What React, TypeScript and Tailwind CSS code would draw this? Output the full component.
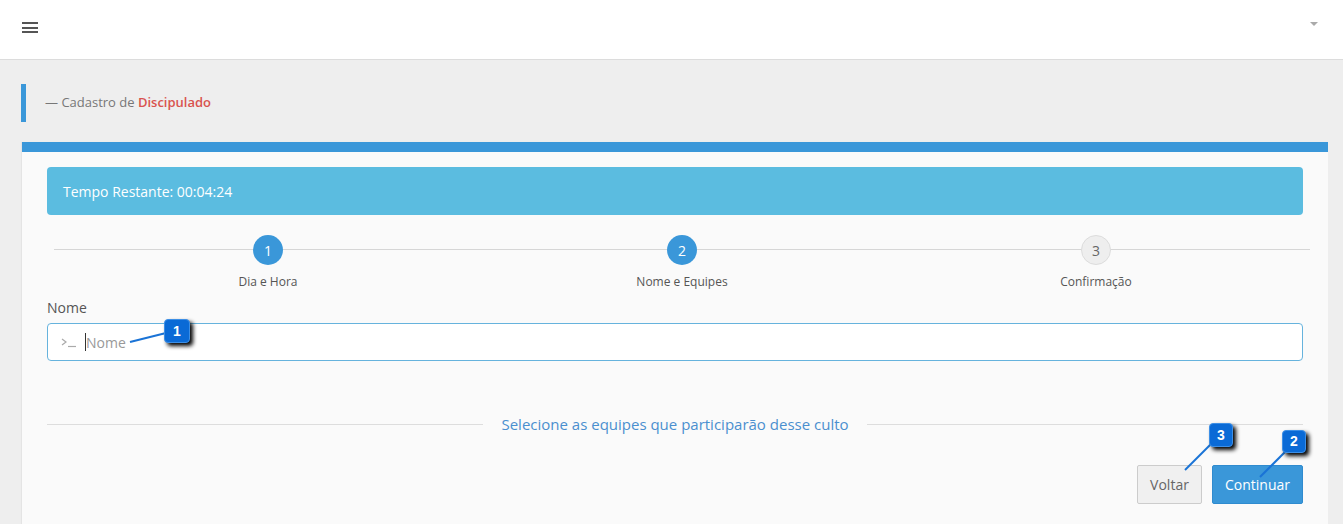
import React from 'react';

const steps = [
  { n: 1, label: 'Dia e Hora', done: true },
  { n: 2, label: 'Nome e Equipes', done: true },
  { n: 3, label: 'Confirmação', done: false },
];

function Badge({ n, className }: { n: number; className: string }) {
  return (
    <div
      className={`absolute flex items-center justify-center rounded-[4px] border border-[#3d8fe6] bg-[#0a6ad6] text-[14px] font-bold text-white shadow-[3px_3px_4px_rgba(0,0,0,1)] font-['Liberation_Sans',sans-serif] ${className}`}
    >
      {n}
    </div>
  );
}

export default function App() {
  return (
    <div className="relative min-h-screen overflow-hidden bg-[#eeeeee] font-['Open_Sans',sans-serif]">
      {/* top bar */}
      <header className="flex h-[60px] items-start justify-between border-b border-[#dcdcdc] bg-white px-[22px]">
        <div className="mt-[22px] flex w-4 flex-col gap-[2.5px]">
          <span className="h-[2px] bg-[#555]" />
          <span className="h-[2px] bg-[#555]" />
          <span className="h-[2px] bg-[#555]" />
        </div>
        <span className="mr-[3px] mt-[22px] h-0 w-0 border-x-[4px] border-t-[4px] border-x-transparent border-t-[#aaa]" />
      </header>

      {/* breadcrumb */}
      <div className="ml-[21px] mt-[24px] flex h-[38px] items-center border-l-[5px] border-[#3a97d9] pl-[19px] text-[13px] text-[#777]">
        — Cadastro de&nbsp;<span className="font-semibold text-[#d9534f]">Discipulado</span>
      </div>

      {/* card */}
      <div className="ml-[22px] mr-[15px] mt-[20px] border-t-[10px] border-[#3a97d9] bg-[#fafafa] px-[25px] pb-10 pt-[15px] shadow-[-1px_0_1px_rgba(0,0,0,0.04)]">
        <div className="flex h-[48px] items-center rounded-[4px] bg-[#5bbce0] px-[16px] text-[14px] text-white">
          Tempo Restante: 00:04:24
        </div>

        <div className="relative mt-[20px]">
          <div className="absolute left-[7px] right-[-7px] top-[14px] h-px bg-[#d6d6d6]" />
          <div className="relative grid grid-cols-3 pl-[14px]">
            {steps.map((s) => (
              <div key={s.n} className="flex flex-col items-center">
                <div
                  className={
                    s.done
                      ? 'flex h-[30px] w-[30px] items-center justify-center rounded-full bg-[#3a97d9] text-[14px] text-white'
                      : 'flex h-[30px] w-[30px] items-center justify-center rounded-full border border-[#dcdcdc] bg-[#eeeeee] text-[14px] text-[#666]'
                  }
                >
                  {s.n}
                </div>
                <div className="mt-[8px] text-[12px] leading-[17px] text-[#555]">{s.label}</div>
              </div>
            ))}
          </div>
        </div>

        <div className="mt-[8px] text-[14px] leading-[20px] text-[#555]">Nome</div>
        <div className="mt-[5px] flex h-[38px] items-center rounded-[4px] border border-[#66b3dd] bg-white pl-[13px]">
          <svg width="16" height="12" viewBox="0 0 16 12" fill="none" stroke="#aaa" strokeWidth="1.2">
            <polyline points="1,3 5,6 1,9" />
            <line x1="7" y1="10.5" x2="15" y2="10.5" />
          </svg>
          <span className="ml-[8px] h-[18px] w-px bg-[#333]" />
          <span className="text-[14px] text-[#999]">Nome</span>
        </div>

        <div className="mt-[53px] flex items-center">
          <div className="h-px flex-1 bg-[#dddddd]" />
          <div className="px-[18px] text-[15px] leading-[20px] text-[#4a8fcf]">
            Selecione as equipes que participarão desse culto
          </div>
          <div className="h-px flex-1 bg-[#dddddd]" />
        </div>

        <div className="mt-[31px] flex justify-end gap-[10px]">
          <button className="h-[39px] w-[65px] rounded-[2px] border border-[#cccccc] bg-[#f0f0f0] text-[14px] text-[#666]">
            Voltar
          </button>
          <button className="h-[39px] w-[91px] rounded-[2px] border border-[#2f8bcf] bg-[#3a97d9] text-[14px] text-white">
            Continuar
          </button>
        </div>
      </div>

      {/* annotations */}
      <svg className="pointer-events-none absolute inset-0 h-full w-full" fill="none" stroke="#1a73d6" strokeWidth="2">
        <line x1="130" y1="342" x2="166" y2="333" />
        <line x1="1185" y1="470" x2="1212" y2="443" />
        <line x1="1260" y1="477" x2="1287" y2="450" />
      </svg>
      <Badge n={1} className="left-[164px] top-[319px] h-[24px] w-[26px]" />
      <Badge n={3} className="left-[1209px] top-[423px] h-[24px] w-[24px]" />
      <Badge n={2} className="left-[1282px] top-[430px] h-[23px] w-[24px]" />
    </div>
  );
}
